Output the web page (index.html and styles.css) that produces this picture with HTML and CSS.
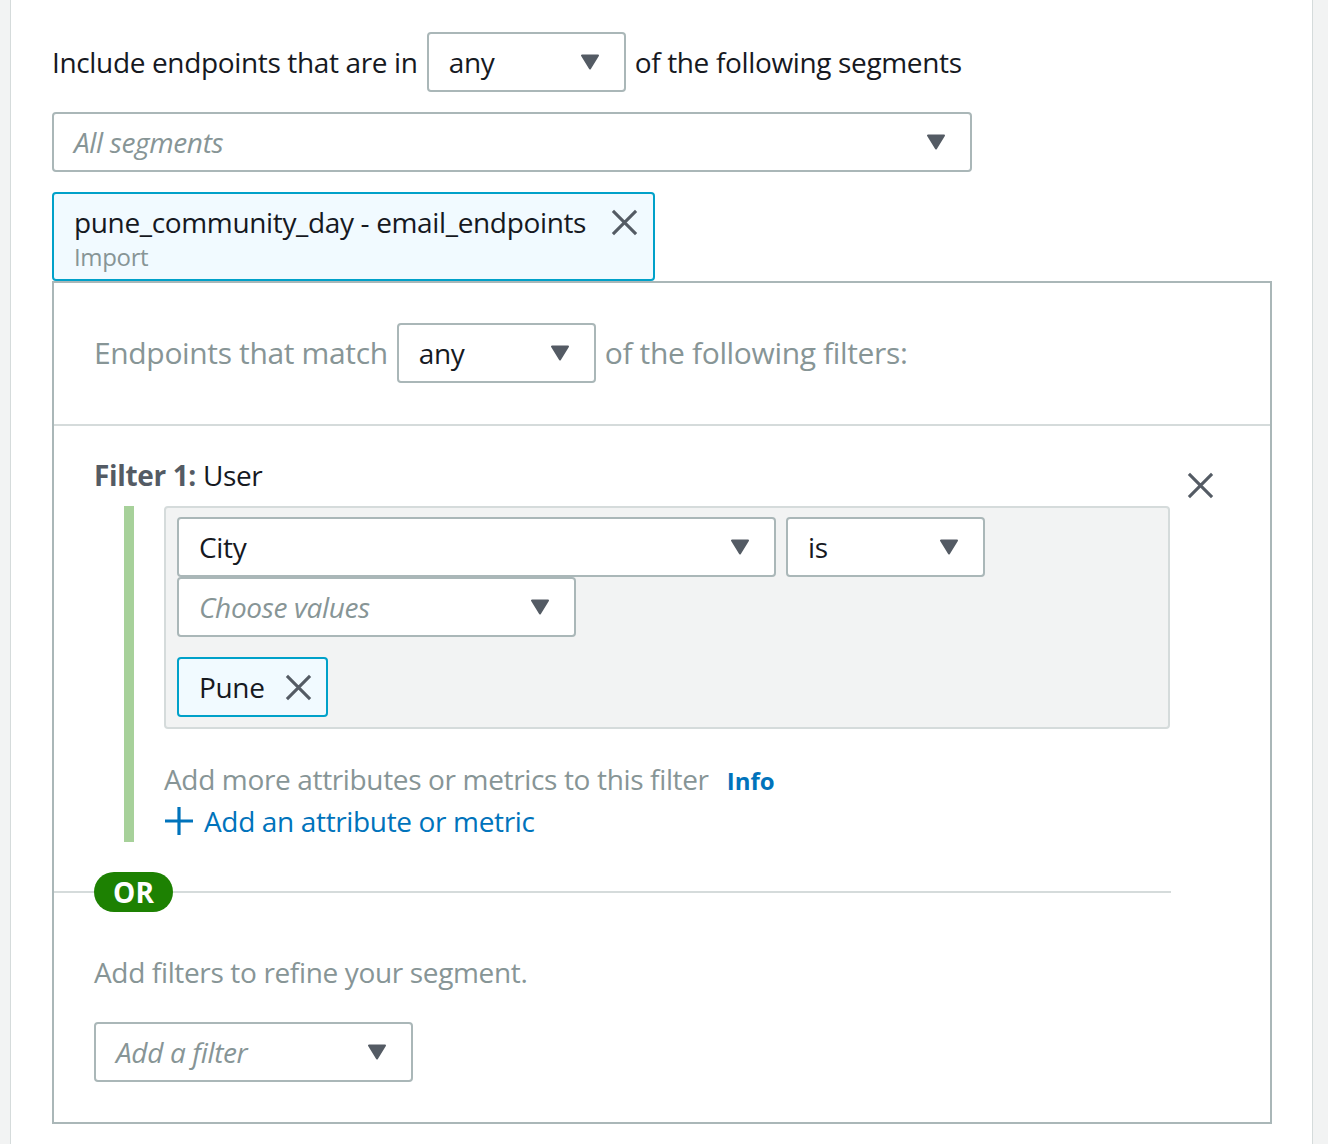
FILE: index.html
```html
<!DOCTYPE html>
<html lang="en">
<head>
<meta charset="utf-8">
<title>Segment filters</title>
<link rel="stylesheet" href="styles.css">
</head>
<body>
<div class="page">
  <div class="inline-row">
    <span class="label">Include endpoints that are in</span>
    <div class="select w-199">
      <span class="value">any</span>
      <svg class="caret" viewBox="0 0 20 16"><path d="M2 1.5 H18 L10 14.5 Z"/></svg>
    </div>
    <span class="label">of the following segments</span>
  </div>

  <div class="select w-920 seg-select">
    <span class="placeholder">All segments</span>
    <svg class="caret" viewBox="0 0 20 16"><path d="M2 1.5 H18 L10 14.5 Z"/></svg>
  </div>

  <div class="token token-seg">
    <div class="token-text">
      <div class="token-title">pune_community_day - email_endpoints</div>
      <div class="token-sub">Import</div>
    </div>
    <svg class="x-icon" viewBox="0 0 28 28"><path d="M2 2 L26 26 M26 2 L2 26"/></svg>
  </div>

  <div class="box">
    <div class="box-head inline-row">
      <span class="muted">Endpoints that match</span>
      <div class="select w-199">
        <span class="value">any</span>
        <svg class="caret" viewBox="0 0 20 16"><path d="M2 1.5 H18 L10 14.5 Z"/></svg>
      </div>
      <span class="muted">of the following filters:</span>
    </div>

    <div class="filter">
      <div class="filter-main">
        <div class="filter-title"><b>Filter 1:</b> User</div>
        <div class="filter-body">
          <div class="bar"></div>
          <div class="filter-content">
            <div class="crit">
              <div class="crit-row">
                <div class="select w-599">
                  <span class="value">City</span>
                  <svg class="caret" viewBox="0 0 20 16"><path d="M2 1.5 H18 L10 14.5 Z"/></svg>
                </div>
                <div class="select w-199">
                  <span class="value">is</span>
                  <svg class="caret" viewBox="0 0 20 16"><path d="M2 1.5 H18 L10 14.5 Z"/></svg>
                </div>
              </div>
              <div class="select w-399">
                <span class="placeholder">Choose values</span>
                <svg class="caret" viewBox="0 0 20 16"><path d="M2 1.5 H18 L10 14.5 Z"/></svg>
              </div>
              <div class="token token-value">
                <span class="token-title">Pune</span>
                <svg class="x-icon" viewBox="0 0 28 28"><path d="M2 2 L26 26 M26 2 L2 26"/></svg>
              </div>
            </div>
            <div class="hint"><span class="muted">Add more attributes or metrics to this filter</span><a class="info">Info</a></div>
            <a class="add-link"><svg class="plus" viewBox="0 0 28 28"><path d="M14 0 V28 M0 14 H28"/></svg><span>Add an attribute or metric</span></a>
          </div>
        </div>
      </div>
      <svg class="x-icon close-filter" viewBox="0 0 28 28"><path d="M2 2 L26 26 M26 2 L2 26"/></svg>
    </div>

    <div class="or-row">
      <span class="or-line lead"></span>
      <span class="pill">OR</span>
      <span class="or-line"></span>
    </div>

    <div class="refine">
      <div class="muted">Add filters to refine your segment.</div>
      <div class="select w-319 add-filter">
        <span class="placeholder">Add a filter</span>
        <svg class="caret" viewBox="0 0 20 16"><path d="M2 1.5 H18 L10 14.5 Z"/></svg>
      </div>
    </div>
  </div>
</div>
</body>
</html>
```

FILE: styles.css
```css
* { box-sizing: border-box; }

html, body {
  margin: 0;
  padding: 0;
}

body {
  background: #f2f3f3;
  font-family: "Open Sans", "Noto Sans", sans-serif;
  font-size: 28px;
  line-height: 30px;
  color: #16191f;
  letter-spacing: -0.35px;
}

.page {
  margin-left: 10px;
  width: 1303px;
  min-height: 1144px;
  background: #ffffff;
  border-left: 1px solid #d5dbdb;
  border-right: 1px solid #d5dbdb;
  padding: 32px 0 20px 41px;
}

.inline-row {
  display: flex;
  align-items: center;
  gap: 9px;
}

.muted { color: #879596; }

.select {
  display: flex;
  align-items: center;
  justify-content: space-between;
  height: 60px;
  flex: none;
  border: 2px solid #aab7b8;
  border-radius: 4px;
  background: #ffffff;
  padding: 0 24px 0 20px;
}

.w-199 { width: 199px; }
.w-319 { width: 319px; }
.w-399 { width: 399px; }
.w-599 { width: 599px; }
.w-920 { width: 920px; }

.value { color: #16191f; }

.placeholder {
  color: #879596;
  font-style: italic;
}

.caret {
  width: 20px;
  height: 16px;
  flex: none;
}
.caret path {
  fill: #545b64;
  stroke: #545b64;
  stroke-width: 2;
  stroke-linejoin: round;
}

.seg-select { margin-top: 20px; }

.token {
  display: flex;
  align-items: flex-start;
  width: fit-content;
  background: #f1faff;
  border: 2px solid #00a1c9;
  border-radius: 4px;
}

.token-seg {
  margin-top: 20px;
  gap: 25px;
  padding: 13px 15px 8px 20px;
}

.token-title { color: #16191f; }

.token-sub {
  margin-top: 6px;
  font-size: 24px;
  line-height: 28px;
  color: #879596;
}

.x-icon {
  width: 27px;
  height: 27px;
  flex: none;
}
.x-icon path {
  fill: none;
  stroke: #545b64;
  stroke-width: 3.2;
}

.token-seg .x-icon { margin-top: 2px; }

.box {
  width: 1220px;
  border: 2px solid #aab7b8;
}

.box-head {
  padding: 40px 0 41px 40px;
  border-bottom: 2px solid #d5dbdb;
  font-size: 30px;
}
.box-head .select { font-size: 28px; }

.filter {
  display: flex;
  align-items: flex-start;
  padding: 34px 0 0 40px;
}

.filter-main { width: 1076px; }

.filter-title {
  color: #16191f;
}
.filter-title b {
  color: #545b64;
  font-weight: 700;
}

.close-filter {
  margin-left: 17px;
  margin-top: 12px;
}

.filter-body {
  display: flex;
  margin-top: 16px;
}

.bar {
  width: 10px;
  margin-left: 30px;
  flex: none;
  background: #a7d19a;
}

.filter-content {
  margin-left: 30px;
  width: 1006px;
  padding-bottom: 6px;
}

.crit {
  background: #f2f3f3;
  border: 2px solid #d5dbdb;
  border-radius: 4px;
  padding: 9px 11px 10px 11px;
}

.crit-row {
  display: flex;
  gap: 10px;
}

.token-value {
  margin-top: 20px;
  height: 60px;
  align-items: center;
  gap: 20px;
  padding: 0 14px 0 20px;
}

.hint {
  margin-top: 35px;
  display: flex;
  align-items: baseline;
  gap: 18px;
}

.info {
  color: #0073bb;
  font-weight: 700;
  font-size: 24px;
  letter-spacing: 0;
}

.add-link {
  display: flex;
  align-items: center;
  gap: 11px;
  margin-top: 10px;
  color: #0073bb;
}

.plus {
  width: 28px;
  height: 28px;
  margin-left: 1px;
  flex: none;
}
.plus path {
  stroke: #0073bb;
  stroke-width: 3.2;
  fill: none;
}

.or-row {
  display: flex;
  align-items: center;
  width: 1117px;
  margin-top: 30px;
}

.or-line {
  flex: 1;
  height: 2px;
  background: #d5dbdb;
}
.or-line.lead {
  flex: none;
  width: 40px;
}

.pill {
  flex: none;
  width: 79px;
  height: 40px;
  border-radius: 20px;
  background: #1d8102;
  color: #ffffff;
  font-weight: 700;
  text-align: center;
  line-height: 40px;
  letter-spacing: 0;
}

.refine {
  padding: 45px 0 40px 40px;
}

.add-filter { margin-top: 35px; }
```
